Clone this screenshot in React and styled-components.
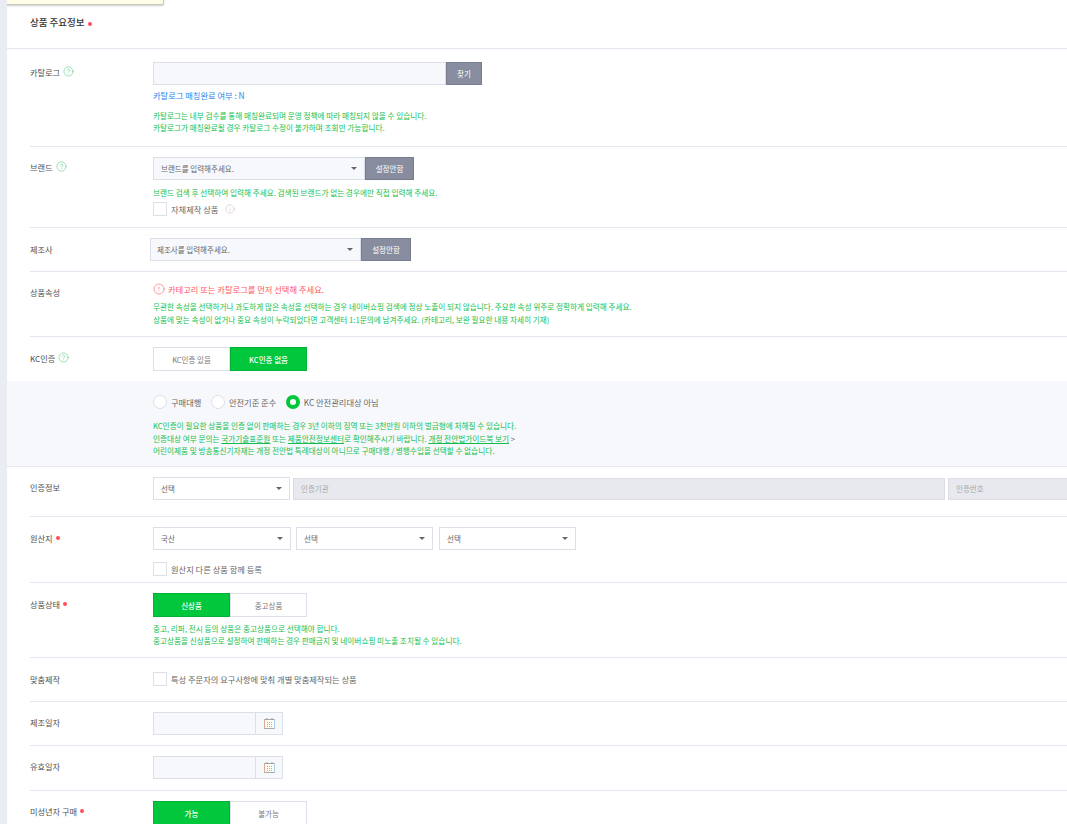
import React from "react";
import styled, { createGlobalStyle } from "styled-components";
import { CircleHelp, CircleAlert, Info } from "lucide-react";

const Global = createGlobalStyle`
  html, body { margin: 0; padding: 0; background: #fff; }
  body { font-family: "Noto Sans CJK KR", "Noto Sans", sans-serif; color: #555; overflow: hidden; }
  * { box-sizing: border-box; }
`;

const Page = styled.div`
  position: relative;
  width: 1067px;
  height: 824px;
  overflow: hidden;
  border-left: 7px solid #e9ecf3;
`;
const Tooltip = styled.div`
  position: absolute;
  left: -4px;
  top: -5px;
  width: 161px;
  height: 10px;
  background: #fffde6;
  border: 1px solid #c8c8bc;
  border-radius: 2px;
  box-shadow: 0 1px 2px rgba(0, 0, 0, 0.2);
`;
const Header = styled.div`
  height: 49px;
  padding: 15px 0 0 23px;
  border-bottom: 1px solid #e4e7f0;
  display: flex;
  align-items: flex-start;
  gap: 3.5px;
`;
const Title = styled.h2`
  margin: 0;
  font-size: 9.5px;
  line-height: 15px;
  font-weight: 500;
  color: #333;
`;
const Dot = styled.i`
  display: inline-block;
  width: 4px;
  height: 4px;
  border-radius: 50%;
  background: #ff4d5a;
  flex: none;
`;
const TitleDot = styled(Dot)`
  margin-top: 6.5px;
`;
const Row = styled.section`
  display: grid;
  grid-template-columns: 123px 1fr;
  margin-left: 23px;
  height: ${(p) => p.$h}px;
  padding-top: ${(p) => p.$pt ?? 10}px;
  border-bottom: ${(p) => (p.$noLine ? "none" : "1px solid #e4e7f0")};
`;
const Label = styled.div`
  display: flex;
  align-items: center;
  gap: 3px;
  height: 17px;
  margin-top: ${(p) => p.$mt ?? 0}px;
  font-size: 8.2px;
  color: #4f4f4f;
  white-space: nowrap;
`;
const HelpIcon = styled(CircleHelp)`
  color: #2ebd6b;
  flex: none;
`;
const Content = styled.div`
  min-width: 0;
  margin-left: ${(p) => p.$ml ?? 0}px;
`;
const Line = styled.div`
  display: flex;
  align-items: center;
  gap: ${(p) => p.$gap ?? 0}px;
  margin-top: ${(p) => p.$mt ?? 0}px;
`;
const Field = styled.div`
  width: ${(p) => p.$w}px;
  height: 23px;
  flex: none;
  background: #f7f8fc;
  border: 1px solid #dcdfe8;
`;
const FindButton = styled.button`
  width: ${(p) => p.$w}px;
  height: 23px;
  flex: none;
  padding: 0;
  background: #878d9f;
  border: 1px solid #777d8f;
  color: #fff;
  font: inherit;
  font-size: 7.5px;
`;
const Select = styled.div`
  position: relative;
  width: ${(p) => p.$w}px;
  height: 23px;
  flex: none;
  display: flex;
  align-items: center;
  padding-left: ${(p) => p.$pl ?? 7}px;
  margin-left: ${(p) => p.$ml ?? 0}px;
  font-size: 7.5px;
  color: #666;
  background: ${(p) => (p.$tint ? "#f7f8fc" : "#fff")};
  border: 1px solid #dcdfe8;
  &::after {
    content: "";
    position: absolute;
    right: 7px;
    top: 9px;
    border: 3px solid transparent;
    border-top: 3.5px solid #666;
    border-bottom: none;
  }
`;
const Disabled = styled.div`
  height: 22px;
  flex: none;
  width: ${(p) => p.$w}px;
  display: flex;
  align-items: center;
  padding-left: 7px;
  font-size: 7.5px;
  color: #aaa;
  background: #e8e9ee;
  border: 1px solid #dcdde3;
`;
const Blue = styled.div`
  margin-top: 4px;
  font-size: 8.25px;
  line-height: 12px;
  color: #1a86ee;
`;
const Help = styled.p`
  margin: ${(p) => p.$mt ?? 0}px 0 0;
  font-size: 7.64px;
  line-height: ${(p) => p.$lh ?? 12}px;
  color: #12bf4e;
  white-space: nowrap;
  a { color: inherit; text-decoration: underline; }
`;
const CheckLine = styled.label`
  display: flex;
  align-items: center;
  gap: 4px;
  margin-top: ${(p) => p.$mt ?? 0}px;
  font-size: 8.25px;
  color: #666;
`;
const Box = styled.span`
  width: 14px;
  height: 14px;
  flex: none;
  background: #fff;
  border: 1px solid #dcdfe8;
`;
const InfoIcon = styled(Info)`
  color: #c9a9b0;
  margin-left: 3px;
`;
const Warn = styled.div`
  display: flex;
  align-items: center;
  gap: 3px;
  height: 17px;
  font-size: 8.27px;
  color: #ff5566;
`;
const WarnIcon = styled(CircleAlert)`
  color: #ff4d5a;
  flex: none;
`;
const Toggle = styled.div`
  display: flex;
`;
const ToggleButton = styled.button`
  width: 77px;
  height: 24px;
  padding: 0;
  font: inherit;
  font-size: 7.5px;
  font-weight: ${(p) => (p.$on ? 500 : 400)};
  color: ${(p) => (p.$on ? "#fff" : "#777")};
  background: ${(p) => (p.$on ? "#00c73c" : "#fff")};
  border: 1px solid ${(p) => (p.$on ? "#00b336" : "#dcdfe8")};
`;
const Panel = styled.div`
  height: 86px;
  padding: 13px 0 0 146px;
  background: #f7f8fc;
  border-bottom: 1px solid #e4e7f0;
`;
const Radios = styled.div`
  display: flex;
  align-items: center;
  height: 16px;
`;
const RadioItem = styled.label`
  display: flex;
  align-items: center;
  gap: 4px;
  margin-right: 9.5px;
  font-size: 8.25px;
  color: #666;
`;
const RadioDot = styled.span`
  width: 14px;
  height: 14px;
  border-radius: 50%;
  flex: none;
  background: #fff;
  border: ${(p) => (p.$on ? "4px solid #00c73c" : "1px solid #dcdfe8")};
`;
const Chevron = styled.span`
  color: #666;
`;
const CalButton = styled.div`
  width: 27px;
  height: 23px;
  flex: none;
  display: flex;
  align-items: center;
  justify-content: center;
  background: #f7f8fc;
  border: 1px solid #dcdfe8;
  border-left: none;
`;

const Q = () => <HelpIcon size={11} strokeWidth={1} />;

const Calendar = () => (
  <svg width="11" height="11" viewBox="0 0 11 11" fill="none">
    <rect x="0.5" y="1.5" width="10" height="9" fill="#fdfbf2" stroke="#aaa9a6" strokeWidth="1" />
    <path d="M0.5 1.5v9" stroke="#dba996" strokeWidth="1" />
    <path d="M10.5 1.5v9" stroke="#a9d2ee" strokeWidth="1" />
    <path d="M3 0v2M8 0v2" stroke="#9a9a9a" strokeWidth="1" />
    <path d="M3 4.5h1M5 4.5h1M7 4.5h1M3 6.5h1M5 6.5h1M7 6.5h1M3 8.5h1M5 8.5h1M7 8.5h1" stroke="#b4b2aa" strokeWidth="1" />
  </svg>
);

const DateField = () => (
  <Line>
    <Field $w={103} />
    <CalButton><Calendar /></CalButton>
  </Line>
);

export default function App() {
  return (
    <Page>
      <Global />
      <Tooltip />
      <Header>
        <Title>상품 주요정보</Title>
        <TitleDot />
      </Header>

      <Row $h={98} $pt={13}>
        <Label $mt={1}>카탈로그 <Q /></Label>
        <Content>
          <Line>
            <Field $w={293} />
            <FindButton $w={36}>찾기</FindButton>
          </Line>
          <Blue>카탈로그 매칭완료 여부 : N</Blue>
          <Help $mt={9}>
            카탈로그는 내부 검수를 통해 매칭완료되며 운영 정책에 따라 매칭되지 않을 수 있습니다.<br />
            카탈로그가 매칭완료될 경우 카탈로그 수정이 불가하며 조회만 가능합니다.
          </Help>
        </Content>
      </Row>

      <Row $h={81}>
        <Label $mt={1}>브랜드 <Q /></Label>
        <Content>
          <Line>
            <Select $w={212} $tint>브랜드를 입력해주세요.</Select>
            <FindButton $w={49}>설정안함</FindButton>
          </Line>
          <Help $mt={7}>브랜드 검색 후 선택하여 입력해 주세요. 검색된 브랜드가 없는 경우에만 직접 입력해 주세요.</Help>
          <CheckLine $mt={3}>
            <Box />
            자체제작 상품
            <InfoIcon size={10} strokeWidth={1.1} />
          </CheckLine>
        </Content>
      </Row>

      <Row $h={44}>
        <Label $mt={2}>제조사</Label>
        <Content $ml={-3}>
          <Line>
            <Select $w={211} $tint $pl={6}>제조사를 입력해주세요.</Select>
            <FindButton $w={50}>설정안함</FindButton>
          </Line>
        </Content>
      </Row>

      <Row $h={65} $pt={8}>
        <Label $mt={3}>상품속성</Label>
        <Content>
          <Warn>
            <WarnIcon size={12} strokeWidth={1.1} />
            카테고리 또는 카탈로그를 먼저 선택해 주세요.
          </Warn>
          <Help $mt={4} $lh={12.5}>
            무관한 속성을 선택하거나 과도하게 많은 속성을 선택하는 경우 네이버쇼핑 검색에 정상 노출이 되지 않습니다. 주요한 속성 위주로 정확하게 입력해 주세요.<br />
            상품에 맞는 속성이 없거나 중요 속성이 누락되었다면 고객센터 1:1문의에 남겨주세요. (카테고리, 보완 필요한 내용 자세히 기재)
          </Help>
        </Content>
      </Row>

      <Row $h={44} $noLine>
        <Label $mt={2}>KC인증 <Q /></Label>
        <Content>
          <Toggle>
            <ToggleButton>KC인증 있음</ToggleButton>
            <ToggleButton $on>KC인증 없음</ToggleButton>
          </Toggle>
        </Content>
      </Row>

      <Panel>
        <Radios>
          <RadioItem><RadioDot />구매대행</RadioItem>
          <RadioItem><RadioDot />안전기준 준수</RadioItem>
          <RadioItem><RadioDot $on />KC 안전관리대상 아님</RadioItem>
        </Radios>
        <Help $mt={10} $lh={12.5}>
          KC인증이 필요한 상품을 인증 없이 판매하는 경우 3년 이하의 징역 또는 3천만원 이하의 벌금형에 처해질 수 있습니다.<br />
          인증대상 여부 문의는 <a>국가기술표준원</a> 또는 <a>제품안전정보센터</a>로 확인해주시기 바랍니다. <a>개정 전안법가이드북 보기</a> <Chevron>&gt;</Chevron><br />
          어린이제품 및 방송통신기자재는 개정 전안법 특례대상이 아니므로 구매대행 / 병행수입을 선택할 수 없습니다.
        </Help>
      </Panel>

      <Row $h={50}>
        <Label $mt={1}>인증정보</Label>
        <Content>
          <Line $gap={3}>
            <Select $w={137}>선택</Select>
            <Disabled $w={652}>인증기관</Disabled>
            <Disabled $w={130}>인증번호</Disabled>
          </Line>
        </Content>
      </Row>

      <Row $h={66}>
        <Label $mt={2}>원산지 <Dot /></Label>
        <Content>
          <Line $gap={5}>
            <Select $w={138}>국산</Select>
            <Select $w={137}>선택</Select>
            <Select $w={137} $ml={1}>선택</Select>
          </Line>
          <CheckLine $mt={12}>
            <Box />
            원산지 다른 상품 함께 등록
          </CheckLine>
        </Content>
      </Row>

      <Row $h={75}>
        <Label $mt={2}>상품상태 <Dot /></Label>
        <Content>
          <Toggle>
            <ToggleButton $on>신상품</ToggleButton>
            <ToggleButton>중고상품</ToggleButton>
          </Toggle>
          <Help $mt={6}>
            중고, 리퍼, 전시 등의 상품은 중고상품으로 선택해야 합니다.<br />
            중고상품을 신상품으로 설정하여 판매하는 경우 판매금지 및 네이버쇼핑 미노출 조치될 수 있습니다.
          </Help>
        </Content>
      </Row>

      <Row $h={44} $pt={14}>
        <Label $mt={-2}>맞춤제작</Label>
        <Content>
          <CheckLine>
            <Box />
            특성 주문자의 요구사항에 맞춰 개별 맞춤제작되는 상품
          </CheckLine>
        </Content>
      </Row>

      <Row $h={44}>
        <Label $mt={1}>제조일자</Label>
        <Content><DateField /></Content>
      </Row>

      <Row $h={45}>
        <Label $mt={1}>유효일자</Label>
        <Content><DateField /></Content>
      </Row>

      <Row $h={40} $noLine>
        <Label $mt={1}>미성년자 구매 <Dot /></Label>
        <Content>
          <Toggle>
            <ToggleButton $on>가능</ToggleButton>
            <ToggleButton>불가능</ToggleButton>
          </Toggle>
        </Content>
      </Row>
    </Page>
  );
}
